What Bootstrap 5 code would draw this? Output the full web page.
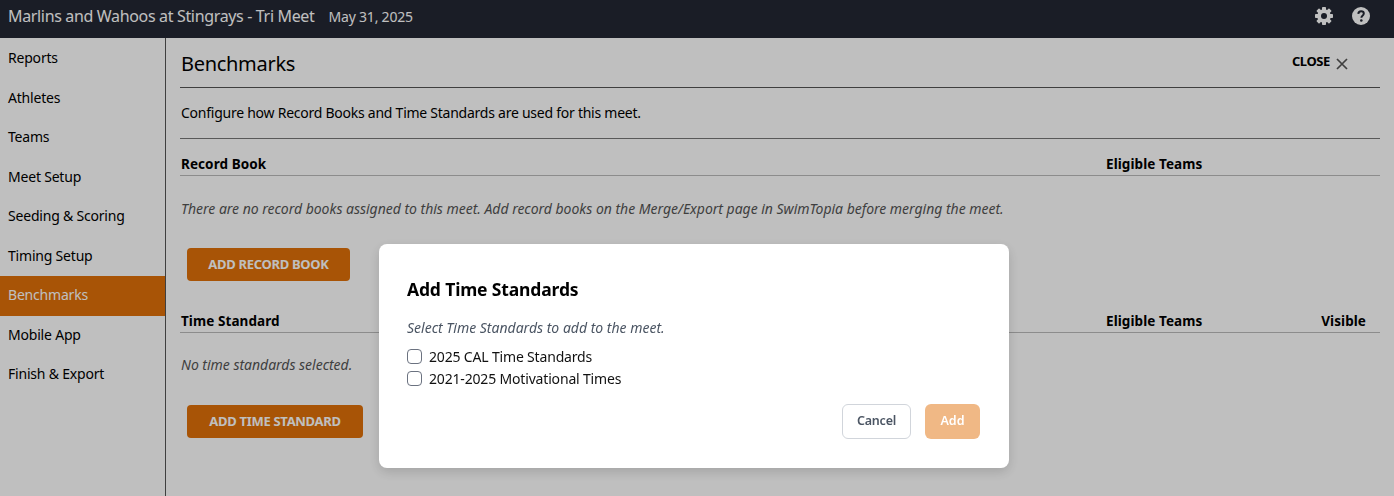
<!DOCTYPE html>
<html lang="en"><head><meta charset="utf-8"><title>Benchmarks</title>
<link href="https://cdn.jsdelivr.net/npm/bootstrap@5.3.0/dist/css/bootstrap.min.css" rel="stylesheet">
<style>
html,body{height:100%;overflow:hidden}
body{font-family:"Noto Sans","Open Sans",sans-serif;font-size:14px;color:#000;background:#fff}
.topbar{height:38px;background:#232733;color:#fff;padding:0 8px 6px}
.meet-name{font-size:16px;letter-spacing:-.34px}
.meet-date{font-size:14px;margin-left:14px;letter-spacing:-.2px}
.top-icons{margin-right:16px;gap:18px}
.shell{height:458px}
.sidebar{width:166px;border-right:1px solid #555;flex:none;padding-top:1px}
.side-item{height:39.5px;padding:0 0 2.500px 8px;display:flex;align-items:center;color:#000;text-decoration:none;letter-spacing:-.2px}
.side-item.on{background:#e07108;color:#fff}
.main-pane{padding:0 14px;min-width:0}
.page-head{height:50px;border-bottom:1px solid #555}
.page-title{font-size:20px;font-weight:400;margin:0;letter-spacing:-.3px;padding:3px 0 0 1px}
.close-link{font-size:13px;font-weight:700;margin-right:6px;letter-spacing:-.4px;margin-top:-2px}
.close-x{margin-right:32px;margin-top:2px}
.intro{height:51px;border-bottom:1px solid #777;display:flex;align-items:center;letter-spacing:-.25px;padding:0 0 2px 1px}
.col-head{height:37px;border-bottom:1px solid #bbb;display:flex;align-items:flex-end;padding:0 0 1px 1px;font-weight:700;font-size:13.5px;letter-spacing:.08px}
.col-a{flex:1}.col-b{width:215px}.col-c{width:59px;padding-right:14px;text-align:right}
.hint{font-style:italic;color:#555;letter-spacing:-.02px;padding-left:1px}
.add-btn{background:#e07108;border:0;color:#fff;font-weight:700;font-size:13px;height:33px;padding:0;border-radius:4px;letter-spacing:-.3px;margin-left:7px}
.add-book{width:163px}.add-std{width:176px}
.gap-a{margin-top:22px}.gap-b{margin-top:29px}.gap-c{margin-top:15px}.gap-d{margin-top:21px}.gap-e{margin-top:30px}
.shade{position:fixed;inset:0;background:rgba(0,0,0,.25)}
.dialog-box{position:fixed;left:379px;top:244px;width:630px;height:224px;background:#fff;border-radius:8px;padding:32px 29px 29px 28px;box-shadow:0 4px 12px rgba(0,0,0,.15)}
.dialog-title{font-size:17.5px;font-weight:700;margin:0;letter-spacing:-.15px;line-height:27px}
.dialog-hint{font-style:italic;font-size:14px;color:#4b5563;margin:15px 0 7px;line-height:20px}
.pick{display:flex;align-items:center;height:22px;font-size:14px;color:#111;letter-spacing:-.17px}
.pick input{width:15px;height:15px;border:1px solid #6b7280;border-radius:4px;margin:0 7px 0 0;appearance:none;background:#fff}
.btn-row{margin-top:15px;gap:14px}
.btn-cancel{width:69px;height:35px;border:1px solid #d1d5db;border-radius:6px;background:#fff;color:#4b5563;font-weight:600;font-size:12.5px;letter-spacing:-.2px;padding:0}
.btn-add{width:55px;height:35px;border:0;border-radius:6px;background:#f0b885;color:#fff;font-weight:600;font-size:12.5px;padding:0}
</style></head><body>
<header class="topbar d-flex align-items-center">
<span class="meet-name">Marlins and Wahoos at Stingrays - Tri Meet</span><span class="meet-date">May 31, 2025</span>
<div class="ms-auto d-flex align-items-center top-icons">
<svg width="20" height="20" viewBox="0 0 20 20" fill="#fff"><g><rect x="8" y="1" width="4" height="18" rx=".8"/><rect x="8" y="1" width="4" height="18" rx=".8" transform="rotate(45 10 10)"/><rect x="8" y="1" width="4" height="18" rx=".8" transform="rotate(90 10 10)"/><rect x="8" y="1" width="4" height="18" rx=".8" transform="rotate(135 10 10)"/></g><circle cx="10" cy="10" r="6.800"/><circle cx="10" cy="10" r="3" fill="#232733"/></svg>
<svg width="18" height="18" viewBox="0 0 18 18"><circle cx="9" cy="9" r="9" fill="#fff"/><path d="M6.300 6.900C6.400 5.200 7.500 4.300 9.100 4.300c1.600 0 2.700 1 2.700 2.300 0 1-.5 1.500-1.300 2.100-.8.600-1.100.9-1.100 2" fill="none" stroke="#232733" stroke-width="2"/><circle cx="9.300" cy="13.500" r="1.300" fill="#232733"/></svg>
</div></header>
<div class="shell d-flex">
<nav class="sidebar">
<a class="side-item">Reports</a><a class="side-item">Athletes</a><a class="side-item">Teams</a><a class="side-item">Meet Setup</a><a class="side-item">Seeding &amp; Scoring</a><a class="side-item">Timing Setup</a><a class="side-item on">Benchmarks</a><a class="side-item">Mobile App</a><a class="side-item">Finish &amp; Export</a>
</nav>
<main class="main-pane flex-grow-1">
<div class="page-head d-flex align-items-center justify-content-between">
<h1 class="page-title">Benchmarks</h1>
<div class="d-flex align-items-center"><span class="close-link">CLOSE</span>
<svg class="close-x" width="12" height="12" viewBox="0 0 12 12"><path d="M1 1l10 10M11 1L1 11" stroke="#555" stroke-width="1.700"/></svg></div>
</div>
<div class="intro">Configure how Record Books and Time Standards are used for this meet.</div>
<div class="col-head"><span class="col-a">Record Book</span><span class="col-b">Eligible Teams</span><span class="col-c"></span></div>
<p class="hint mb-0 gap-a">There are no record books assigned to this meet. Add record books on the Merge/Export page in SwimTopia before merging the meet.</p>
<div class="gap-b"><button class="add-btn add-book">ADD RECORD BOOK</button></div>
<div class="col-head gap-c"><span class="col-a">Time Standard</span><span class="col-b">Eligible Teams</span><span class="col-c">Visible</span></div>
<p class="hint mb-0 gap-d">No time standards selected.</p>
<div class="gap-e"><button class="add-btn add-std">ADD TIME STANDARD</button></div>
</main></div>
<div class="shade"></div>
<div class="dialog-box" role="dialog">
<h2 class="dialog-title">Add Time Standards</h2>
<p class="dialog-hint">Select Time Standards to add to the meet.</p>
<label class="pick"><input type="checkbox">2025 CAL Time Standards</label>
<label class="pick"><input type="checkbox">2021-2025 Motivational Times</label>
<div class="d-flex justify-content-end btn-row"><button class="btn-cancel">Cancel</button><button class="btn-add">Add</button></div>
</div>
<script src="https://cdn.jsdelivr.net/npm/bootstrap@5.3.0/dist/js/bootstrap.bundle.min.js"></script>
</body></html>
